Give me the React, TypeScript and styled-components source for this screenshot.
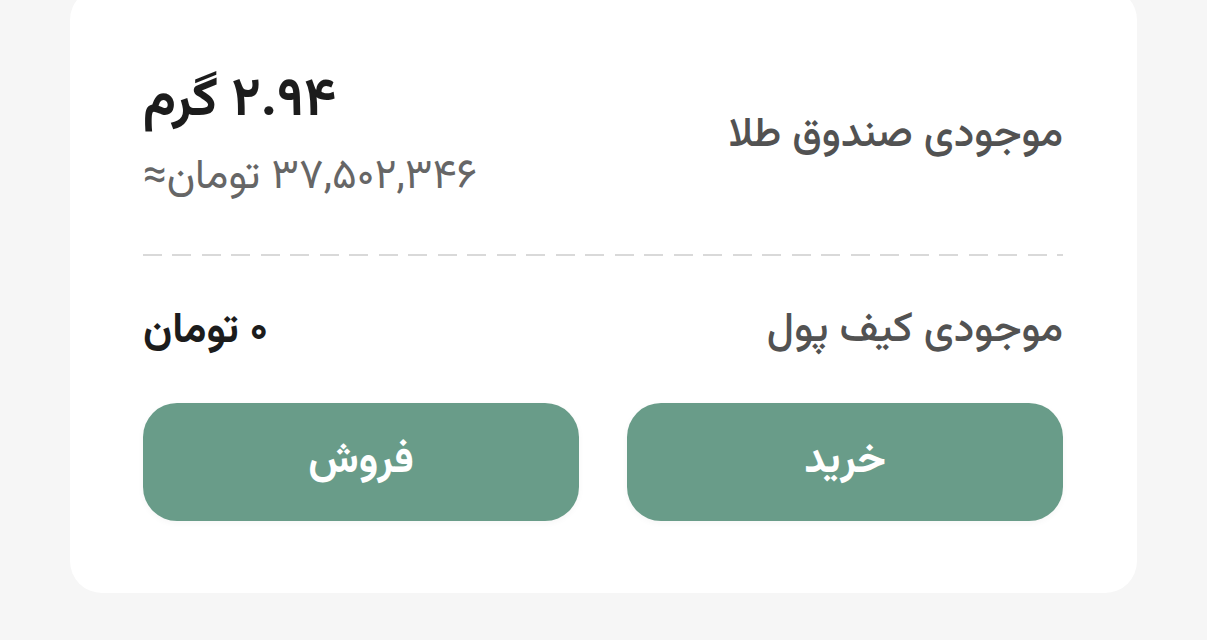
import React from "react";
import styled, { createGlobalStyle } from "styled-components";

const Global = createGlobalStyle`
  html, body { margin: 0; padding: 0; background: #f6f6f6; }
  body { font-family: "Vazirmatn", "Noto Sans Arabic", "DejaVu Sans", sans-serif; }
  #root { height: 640px; overflow: hidden; }
`;

const Page = styled.div`
  height: 640px;
  overflow: hidden;
  background: #f6f6f6;
  padding-left: 70px;
  width: 1067px;
`;

const Card = styled.div`
  direction: rtl;
  margin-top: -12px;
  background: #ffffff;
  border-radius: 32px;
  padding: 82px 74px 72px 73px;
  display: flex;
  flex-direction: column;
`;

const Row = styled.div`
  display: flex;
  align-items: center;
  justify-content: space-between;
`;

const Label = styled.div`
  font-size: 42px;
  font-weight: 500;
  color: #525252;
  line-height: 55px;
`;

const ValueBlock = styled.div`
  display: flex;
  flex-direction: column;
  align-items: flex-end;
  gap: 18px;
`;

const Value = styled.div<{ $size: number }>`
  font-size: ${(p) => p.$size}px;
  font-weight: 700;
  color: #1c1c1c;
  line-height: ${(p) => Math.round(p.$size * 1.2)}px;
`;

const SubValue = styled.div`
  font-size: 42px;
  color: #666666;
  line-height: 50px;
`;

const Divider = styled.div`
  height: 2px;
  margin: 51px 0 48px;
  background-image: repeating-linear-gradient(
    to right,
    #d9d9d9 0,
    #d9d9d9 19px,
    transparent 19px,
    transparent 29.5px
  );
`;

const Buttons = styled.div`
  display: grid;
  grid-template-columns: 1fr 1fr;
  gap: 48px;
  margin-top: 44px;
`;

const ActionButton = styled.button`
  height: 118px;
  border: none;
  border-radius: 34px;
  background: #699c89;
  color: #ffffff;
  font-family: inherit;
  font-size: 42px;
  font-weight: 700;
  cursor: pointer;
  box-shadow: 0 2px 6px rgba(0, 0, 0, 0.04);
`;

export default function App() {
  return (
    <>
      <Global />
      <Page>
        <Card>
          <Row>
            <Label>موجودی صندوق طلا</Label>
            <ValueBlock>
              <Value $size={54}>۲.۹۴ گرم</Value>
              <SubValue>۳۷,۵۰۲,۳۴۶ تومان≈</SubValue>
            </ValueBlock>
          </Row>
          <Divider />
          <Row>
            <Label>موجودی کیف پول</Label>
            <Value $size={42}>۰ تومان</Value>
          </Row>
          <Buttons>
            <ActionButton>خرید</ActionButton>
            <ActionButton>فروش</ActionButton>
          </Buttons>
        </Card>
      </Page>
    </>
  );
}
